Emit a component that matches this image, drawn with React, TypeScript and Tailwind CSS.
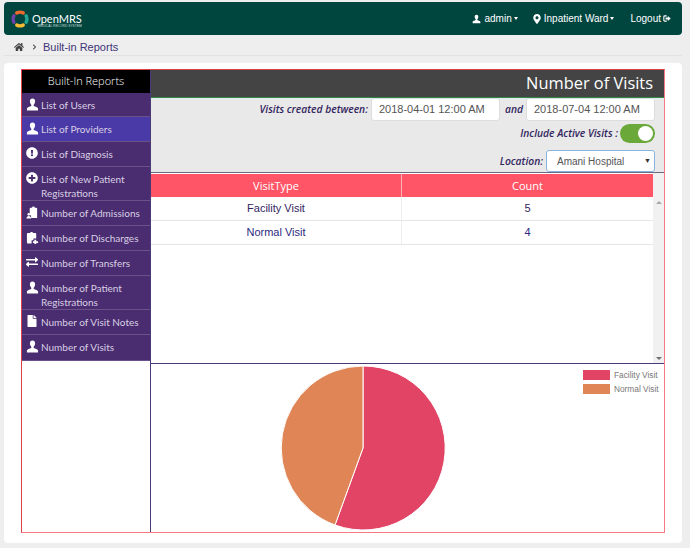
import { FaExchangeAlt, FaExclamationCircle, FaFile, FaHome, FaPlusCircle, FaChevronRight, FaMapMarkerAlt } from 'react-icons/fa'

function UserIcon({ className }: { className?: string }) {
  return (
    <svg viewBox="0 0 14 14" className={className} fill="currentColor">
      <path d="M7 0.5C5.2 0.5 4.2 1.8 4.2 3.6c0 1.5.6 3 1.5 3.8v1.1C4 9.4 1.2 9.8 1 11.3V13.5h12v-2.2c-.2-1.5-3-1.9-4.7-2.8V7.4c.9-.8 1.5-2.3 1.5-3.8C9.8 1.8 8.8.5 7 .5z" />
    </svg>
  )
}

function LogoutIcon({ className }: { className?: string }) {
  return (
    <svg viewBox="0 0 14 14" className={className} fill="currentColor">
      <path d="M6.5 1.5H3A2.5 2.5 0 0 0 .5 4v6A2.5 2.5 0 0 0 3 12.5h3.5V10.6H3.4a1 1 0 0 1-1-1V4.4a1 1 0 0 1 1-1h3.1z" />
      <path d="M8.5 2.8 13.5 7l-5 4.2V8.6H4.5V5.4h4z" />
    </svg>
  )
}

// clipboard with a person in front, used for admissions
function AdmitIcon({ className }: { className?: string }) {
  return (
    <svg viewBox="0 0 14 14" className={className} fill="currentColor">
      <path d="M5 2h1.5a1.5 1.5 0 0 1 3 0H11a1 1 0 0 1 1 1v10H5.5V10.5L4 9.5V3a1 1 0 0 1 1-1z" />
      <circle cx="3" cy="9" r="1.4" />
      <path d="M.5 13.5c0-1.6 1-2.6 2.5-2.6s2.5 1 2.5 2.6z" />
    </svg>
  )
}

function DischargeIcon({ className }: { className?: string }) {
  return (
    <svg viewBox="0 0 14 14" className={className} fill="currentColor">
      <path d="M2 2.2h2.2a2 2 0 0 1 3.6 0H10a1 1 0 0 1 1 1V8H8v2H6v3.5H2a1 1 0 0 1-1-1V3.2a1 1 0 0 1 1-1z" />
      <path d="M9 9.5h2v1.5h2v2h-2v1H9v-1H7.5v-2H9z" />
    </svg>
  )
}

function Logo() {
  return (
    <svg viewBox="0 0 20 20" className="w-[18px] h-[18px]" fill="none" strokeWidth="3.8" strokeLinecap="round">
      <path d="M6.5 3.2A8 8 0 0 1 13.5 3.2" stroke="#ee6a2c" />
      <path d="M16.8 6.5A8 8 0 0 1 16.8 13.5" stroke="#22a594" />
      <path d="M13.5 16.8A8 8 0 0 1 6.5 16.8" stroke="#f4bb33" />
      <path d="M3.2 13.5A8 8 0 0 1 3.2 6.5" stroke="#6f42a6" />
    </svg>
  )
}

function Caret() {
  return <span className="inline-block -ml-px w-0 h-0 border-x-[2.5px] border-x-transparent border-t-[3px] border-t-white" />
}

const menu = [
  { label: ['List of Users'], icon: <UserIcon className="w-[13px] h-[13px]" />, h: 'h-[24px]' },
  { label: ['List of Providers'], icon: <UserIcon className="w-[13px] h-[13px]" />, h: 'h-[25px]', active: true },
  { label: ['List of Diagnosis'], icon: <FaExclamationCircle className="w-[12px] h-[12px]" />, h: 'h-[25px]' },
  { label: ['List of New Patient', 'Registrations'], icon: <FaPlusCircle className="w-[12px] h-[12px]" />, h: 'h-[34px]' },
  { label: ['Number of Admissions'], icon: <AdmitIcon className="w-[13px] h-[13px]" />, h: 'h-[25px]' },
  { label: ['Number of Discharges'], icon: <DischargeIcon className="w-[13px] h-[13px]" />, h: 'h-[25px]' },
  { label: ['Number of Transfers'], icon: <FaExchangeAlt className="w-[12px] h-[12px]" />, h: 'h-[25px]' },
  { label: ['Number of Patient', 'Registrations'], icon: <UserIcon className="w-[13px] h-[13px]" />, h: 'h-[34px]' },
  { label: ['Number of Visit Notes'], icon: <FaFile className="w-[10px] h-[12px] ml-[1px]" />, h: 'h-[25px]' },
  { label: ['Number of Visits'], icon: <UserIcon className="w-[13px] h-[13px]" />, h: 'h-[26px]' },
]

function DateBox({ value }: { value: string }) {
  return (
    <div className="font-['Liberation_Sans',sans-serif] not-italic w-[129px] h-[23px] bg-white rounded-[3px] border border-[#dddddd] pl-[7px] flex items-center text-[11px] text-[#555555]">
      {value}
    </div>
  )
}

export default function App() {
  return (
    <div className="font-['Liberation_Sans',sans-serif] w-[690px] h-[548px] bg-[#eeeeee] overflow-hidden pt-[2px] pl-[4px]">
      <header className="w-[678px] h-[33px] bg-[#00463f] rounded-[4px] flex items-center justify-between pl-[7px] pr-[11px] text-white text-[10px]">
        <div className="flex items-center gap-[3px]">
          <Logo />
          <div className="flex flex-col">
            <span className="font-['Lato',sans-serif] text-[11px] leading-[11px] mt-[3px]">OpenMRS</span>
            <span className="text-[3.3px] leading-[4px] self-end text-[#cfdedb]">MEDICAL RECORD SYSTEM</span>
          </div>
        </div>
        <nav className="flex items-center">
          <span className="flex items-center gap-[3px]"><UserIcon className="w-[9px] h-[10px]" />admin<Caret /></span>
          <span className="flex items-center gap-[3px] ml-[15px]"><FaMapMarkerAlt className="w-[8px] h-[10px]" />Inpatient Ward<Caret /></span>
          <span className="flex items-center gap-[2px] ml-[16px]">Logout<LogoutIcon className="w-[8px] h-[9px]" /></span>
        </nav>
      </header>

      <div className="w-[678px] h-[21px] border-b border-[#e2e2e2] flex items-center pl-[10px] pt-[4px] text-[#3d3478] text-[11px]">
        <FaHome className="w-[10px] h-[10px] text-[#444444]" />
        <FaChevronRight className="w-[5px] h-[6px] ml-[8px] text-[#444444]" />
        <span className="ml-[6px]">Built-in Reports</span>
      </div>

      <main className="mt-[7px] w-[678px] h-[480px] bg-white rounded-[4px] pt-[6px] pl-[17px]">
        <div className="w-[644px] h-[464px] flex border border-[#f57a84] border-t-[#e0404c] border-l-[#e0404c]">
          <aside className="w-[128px] h-full shrink-0 flex flex-col">
            <div className="h-[23px] bg-black text-white text-[11px] font-light flex items-center justify-center font-['Open_Sans',sans-serif]">Built-In Reports</div>
            {menu.map(m => (
              <div
                key={m.label.join(' ')}
                className={`${m.h} ${m.active ? 'bg-[#4a3aa8]' : 'bg-[#4a2c70]'} border-b border-[#6a5288] flex items-start gap-[2px] pl-[4px] text-[#d8d0e4] font-['Lato',sans-serif] text-[10px] leading-[14px] pt-[5px]`}
              >
                <span className="w-[13px] shrink-0 text-white">{m.icon}</span>
                <span>{m.label.map(l => <span key={l} className="block">{l}</span>)}</span>
              </div>
            ))}
          </aside>

          <section className="flex-1 flex flex-col border-l border-[#4a3a78] min-w-0">
            <div className="h-[28px] shrink-0 bg-[#444444] border-b border-[#2f8a4a] flex items-center justify-end pr-[11px] text-white text-[16.4px] font-['Open_Sans',sans-serif]">
              Number of Visits
            </div>
            <form className="h-[75px] shrink-0 bg-[#e9e9e9] border-b border-[#6a6a80] font-['Open_Sans',sans-serif] italic text-[10.3px] text-[#33265f] pr-[9px] flex flex-col items-end">
              <div className="flex items-center">
                <span className="font-semibold mr-[3px] mt-px">Visits created between:</span>
                <DateBox value="2018-04-01 12:00 AM" />
                <span className="font-semibold ml-[5px] mr-[3px] mt-px">and</span>
                <DateBox value="2018-07-04 12:00 AM" />
              </div>
              <div className="flex items-center gap-[2px] mt-[3px]">
                <span className="font-semibold">Include Active Visits :</span>
                <div className="w-[35px] h-[19px] rounded-full bg-[#6aa83a] flex items-center justify-end pr-[2px]">
                  <div className="w-[15px] h-[15px] rounded-full bg-white" />
                </div>
              </div>
              <div className="flex items-center gap-[3px] mt-[7px]">
                <span className="font-semibold mt-[1px]">Location:</span>
                <div className="font-['Liberation_Sans',sans-serif] not-italic w-[109px] h-[22px] bg-white rounded-[3px] border border-[#8ab4e0] flex items-center justify-between pl-[10px] pr-[3px] text-[10px] text-[#555555]">
                  Amani Hospital
                  <span className="text-[7px] text-[#333333]">▼</span>
                </div>
              </div>
            </form>
            <div className="h-[191px] flex shrink-0 border-b border-[#4a3a78]">
              <div className="flex-1 min-w-0 flex flex-col">
                <div className="h-[23px] mt-px bg-[#ff5566] flex text-white text-[11px] font-['Open_Sans',sans-serif]">
                  <div className="w-[251px] border-r border-[#ffb0b8] flex items-center justify-center pt-px">VisitType</div>
                  <div className="flex-1 flex items-center justify-center pt-px">Count</div>
                </div>
                {[['Facility Visit', '5', 'text-[#33265f]'], ['Normal Visit', '4', 'text-[#2d2a80]']].map(([name, count, color]) => (
                  <div key={name} className={`h-[24px] flex border-b border-[#e6e6e6] text-[11px] ${color}`}>
                    <div className="w-[251px] border-r border-[#eeeeee] flex items-center justify-center">{name}</div>
                    <div className="flex-1 flex items-center justify-center">{count}</div>
                  </div>
                ))}
              </div>
              <div className="w-[11px] bg-[#f1f1f1] flex flex-col justify-between items-center pt-[28px] pb-[3px]">
                <span className="w-0 h-0 border-x-[3px] border-x-transparent border-b-[3px] border-b-[#a8a8a8]" />
                <span className="w-0 h-0 border-x-[3px] border-x-transparent border-t-[3px] border-t-[#707070]" />
              </div>
            </div>
            <div className="flex-1 min-h-0 flex">
              <div className="w-[424px] flex justify-center pt-px">
                <svg viewBox="0 0 166 166" className="w-[166px] h-[166px]">
                  <path d="M83 83V1A82 82 0 1 1 55 160Z" fill="#e24466" stroke="#ffffff" strokeWidth="1" />
                  <path d="M83 83L55 160A82 82 0 0 1 83 1Z" fill="#e08656" stroke="#ffffff" strokeWidth="1" />
                </svg>
              </div>
              <div className="flex-1 flex flex-col gap-[4px] pt-[6px] pl-[8px] text-[8.3px] text-[#777777]">
                <div className="flex items-center gap-[4px] h-[10px]"><span className="w-[27px] h-[10px] bg-[#e24466]" />Facility Visit</div>
                <div className="flex items-center gap-[4px] h-[10px]"><span className="w-[27px] h-[10px] bg-[#e08656]" />Normal Visit</div>
              </div>
            </div>
          </section>
        </div>
      </main>
    </div>
  )
}
